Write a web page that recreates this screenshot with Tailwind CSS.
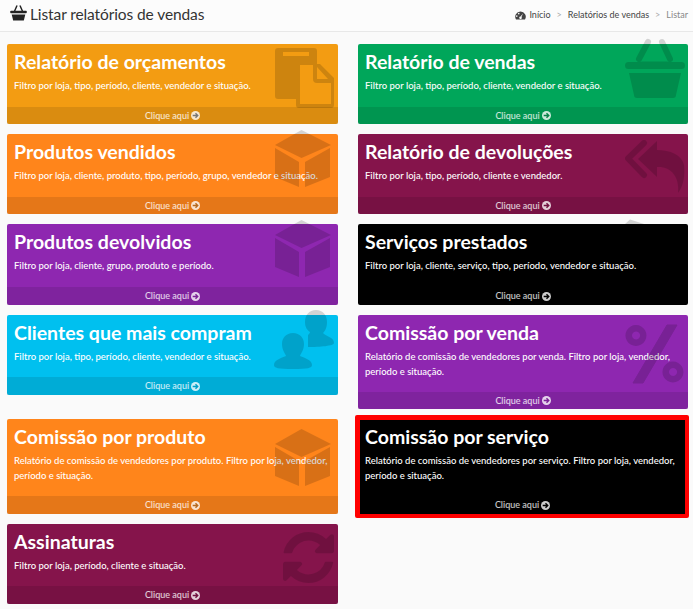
<!DOCTYPE html>
<html lang="en">
<head>
    <meta charset="UTF-8">
    <title>Listar relatórios de vendas</title>
    <script src="https://cdn.jsdelivr.net/npm/@tailwindcss/browser@4"></script>
</head>
<body class="bg-[#fafafa] font-['Lato',sans-serif] overflow-hidden">
    <!-- header -->
    <header class="h-[32px] bg-[#fcfcfc] border-b border-[#e8e8e8] flex items-center justify-between pl-[10px] pr-[5px]">
        <h1 class="flex items-center text-[15.5px] tracking-[-0.1px] text-[#333] leading-[28px] -mt-[3px]">
            <svg class="w-[17px] h-[17px] mr-[3px] -mt-[3px]" viewBox="0 0 70 70" fill="#222">
                <g stroke="#222" stroke-width="6" stroke-linecap="round"><path d="M28 8 19 29M42 8l9 21"/></g>
                <rect x="1" y="28" width="68" height="10" rx="3"/>
                <path d="M7 43h56l-6 25H13z"/>
            </svg>
            Listar relatórios de vendas
        </h1>
        <nav class="flex items-center text-[9px] text-[#444] mt-[-1px]">
            <svg class="w-[11px] h-[9px] mr-[3px]" viewBox="0 0 22 18" fill="#444">
                <path fill-rule="evenodd" d="M11 1a10.500 10.500 0 0 1 9 16H2A10.500 10.500 0 0 1 11 1ZM5 10a1.500 1.500 0 1 0 0 .1ZM9 5a1.500 1.500 0 1 0 0 .1ZM16 5l-5 6a2.500 2.500 0 1 0 2 1Z"/>
            </svg>
            <span>Início</span>
            <span class="mx-[6px] text-[#aaa]">&gt;</span>
            <span>Relatórios de vendas</span>
            <span class="mx-[6px] text-[#aaa]">&gt;</span>
            <span class="text-[#888]">Listar</span>
        </nav>
    </header>

    <main class="grid grid-cols-[331px_330px] gap-x-5 items-start pl-[7px] pt-[12px]">
        <!-- Relatório de orçamentos -->
        <a class="relative block mb-[10px] rounded-[2px] bg-[#f39c12] text-white">
            <div class="h-[63px] pt-[6px] px-[7px]">
                <h3 class="text-[19.5px] font-bold leading-[24px] mb-[4px]">Relatório de orçamentos</h3>
                <p class="text-[9.5px] font-medium leading-[15px]">Filtro por loja, tipo, período, cliente, vendedor e situação.</p>
            </div>
            <div class="h-[17px] bg-black/10 flex items-center justify-center text-[9px] font-medium text-white/80">Clique aqui
                <svg class="w-[9px] h-[9px] ml-[2px]" viewBox="0 0 16 16"><circle cx="8" cy="8" r="8" fill="#fff" fill-opacity=".8"/><path d="M3 8h8M8 4l4 4-4 4" stroke="#777" stroke-width="2.500" fill="none"/></svg>
            </div>
            <svg class="absolute left-[263px] top-[-4px] w-[70px] h-[70px] opacity-15" viewBox="0 0 70 70">
                <path fill-rule="evenodd" d="M8 8H44a3 3 0 0 1 3 3V24H50L64 38V65a3 3 0 0 1-3 3H29a3 3 0 0 1-3-3V59H8a3 3 0 0 1-3-3V11a3 3 0 0 1 3-3ZM13 12V16H39V12ZM30 25V64H61V43H47a4 4 0 0 1-4-4V25ZM47 27V39H58Z"/>
            </svg>
        </a>
        <!-- Relatório de vendas -->
        <a class="relative block mb-[10px] rounded-[2px] bg-[#00a65a] text-white">
            <div class="h-[63px] pt-[6px] px-[7px]">
                <h3 class="text-[19.5px] font-bold leading-[24px] mb-[4px]">Relatório de vendas</h3>
                <p class="text-[9.5px] font-medium leading-[15px]">Filtro por loja, tipo, período, cliente, vendedor e situação.</p>
            </div>
            <div class="h-[17px] bg-black/10 flex items-center justify-center text-[9px] font-medium text-white/80">Clique aqui
                <svg class="w-[9px] h-[9px] ml-[2px]" viewBox="0 0 16 16"><circle cx="8" cy="8" r="8" fill="#fff" fill-opacity=".8"/><path d="M3 8h8M8 4l4 4-4 4" stroke="#0a8048" stroke-width="2.500" fill="none"/></svg>
            </div>
            <svg class="absolute left-[262px] top-[-14px] w-[70px] h-[70px] opacity-15" viewBox="0 0 70 70">
                <path d="M28 12 19 29M42 12l8 17" stroke="#000" stroke-width="6" stroke-linecap="round"/>
                <path d="M8 32H19L22 31.500H47L50 32H61.500a3.500 3.500 0 0 1 0 7H8.500a3.500 3.500 0 0 1 0-7Z"/>
                <path d="M9 43H61L56 65a3 3 0 0 1-3 3H17a3 3 0 0 1-3-3Z"/>
            </svg>
        </a>
        <!-- Produtos vendidos -->
        <a class="relative block mb-[10px] rounded-[2px] bg-[#ff851b] text-white">
            <div class="h-[63px] pt-[6px] px-[7px]">
                <h3 class="text-[19.5px] font-bold leading-[24px] mb-[4px]">Produtos vendidos</h3>
                <p class="text-[9.5px] font-medium leading-[15px] whitespace-nowrap">Filtro por loja, cliente, produto, tipo, período, grupo, vendedor e situação.</p>
            </div>
            <div class="h-[17px] bg-black/10 flex items-center justify-center text-[9px] font-medium text-white/80">Clique aqui
                <svg class="w-[9px] h-[9px] ml-[2px]" viewBox="0 0 16 16"><circle cx="8" cy="8" r="8" fill="#fff" fill-opacity=".8"/><path d="M3 8h8M8 4l4 4-4 4" stroke="#b66a20" stroke-width="2.500" fill="none"/></svg>
            </div>
            <svg class="absolute left-[263px] top-[-8px] w-[70px] h-[70px] opacity-15" viewBox="0 0 70 70">
                <path d="M31.500 4 61 19 31.500 32 5 19ZM5 22 29 36V61L5 51ZM35 36 60 22V51L35 61Z"/>
            </svg>
        </a>
        <!-- Relatório de devoluções -->
        <a class="relative block mb-[10px] rounded-[2px] bg-[#85144b] text-white">
            <div class="h-[63px] pt-[6px] px-[7px]">
                <h3 class="text-[19.5px] font-bold leading-[24px] mb-[4px]">Relatório de devoluções</h3>
                <p class="text-[9.5px] font-medium leading-[15px]">Filtro por loja, tipo, período, cliente e vendedor.</p>
            </div>
            <div class="h-[17px] bg-black/10 flex items-center justify-center text-[9px] font-medium text-white/80">Clique aqui
                <svg class="w-[9px] h-[9px] ml-[2px]" viewBox="0 0 16 16"><circle cx="8" cy="8" r="8" fill="#fff" fill-opacity=".8"/><path d="M3 8h8M8 4l4 4-4 4" stroke="#701040" stroke-width="2.500" fill="none"/></svg>
            </div>
            <svg class="absolute left-[262px] top-[-104px] w-[70px] h-[170px] opacity-15" viewBox="0 0 70 170">
                <path d="M24 113 8 128.500 24 145" stroke="#000" stroke-width="6" stroke-linecap="round" stroke-linejoin="round" fill="none"/>
                <path d="M37 111 18 129 37 147V137C50 136 60 146 58 163 64 155 65 145 64 135 62 125 50 120 37 120Z"/>
            </svg>
        </a>
        <!-- Produtos devolvidos -->
        <a class="relative block mb-[10px] rounded-[2px] bg-[#8e27b0] text-white">
            <div class="h-[63px] pt-[6px] px-[7px]">
                <h3 class="text-[19.5px] font-bold leading-[24px] mb-[4px]">Produtos devolvidos</h3>
                <p class="text-[9.5px] font-medium leading-[15px]">Filtro por loja, cliente, grupo, produto e período.</p>
            </div>
            <div class="h-[18px] bg-black/10 flex items-center justify-center text-[9px] font-medium text-white/80">Clique aqui
                <svg class="w-[9px] h-[9px] ml-[2px]" viewBox="0 0 16 16"><circle cx="8" cy="8" r="8" fill="#fff" fill-opacity=".8"/><path d="M3 8h8M8 4l4 4-4 4" stroke="#7a2296" stroke-width="2.500" fill="none"/></svg>
            </div>
            <svg class="absolute left-[263px] top-[-8px] w-[70px] h-[70px] opacity-15" viewBox="0 0 70 70">
                <path d="M31.500 4 61 19 31.500 32 5 19ZM5 22 29 36V61L5 51ZM35 36 60 22V51L35 61Z"/>
            </svg>
        </a>
        <!-- Serviços prestados -->
        <a class="relative block mb-[10px] rounded-[2px] bg-black text-white">
            <div class="h-[63px] pt-[6px] px-[7px]">
                <h3 class="text-[19.5px] font-bold leading-[24px] mb-[4px]">Serviços prestados</h3>
                <p class="text-[9.5px] font-medium leading-[15px]">Filtro por loja, cliente, serviço, tipo, período, vendedor e situação.</p>
            </div>
            <div class="h-[18px] flex items-center justify-center text-[9px] font-medium text-white/80">Clique aqui
                <svg class="w-[9px] h-[9px] ml-[2px]" viewBox="0 0 16 16"><circle cx="8" cy="8" r="8" fill="#fff" fill-opacity=".8"/><path d="M3 8h8M8 4l4 4-4 4" stroke="#000" stroke-width="2.500" fill="none"/></svg>
            </div>
            <svg class="absolute left-[265px] top-[-5px] w-[24px] h-[5px] opacity-15" viewBox="0 0 24 5">
                <path d="M2 5 7 0.500 21 5Z"/>
            </svg>
        </a>
        <!-- Clientes que mais compram -->
        <a class="relative block mb-[10px] rounded-[2px] bg-[#00c0ef] text-white">
            <div class="h-[62px] pt-[6px] px-[7px]">
                <h3 class="text-[19.5px] font-bold leading-[24px] mb-[4px]">Clientes que mais compram</h3>
                <p class="text-[9.5px] font-medium leading-[15px]">Filtro por loja, tipo, período, cliente, vendedor e situação.</p>
            </div>
            <div class="h-[18px] bg-black/10 flex items-center justify-center text-[9px] font-medium text-white/80">Clique aqui
                <svg class="w-[9px] h-[9px] ml-[2px]" viewBox="0 0 16 16"><circle cx="8" cy="8" r="8" fill="#fff" fill-opacity=".8"/><path d="M3 8h8M8 4l4 4-4 4" stroke="#00a0c8" stroke-width="2.500" fill="none"/></svg>
            </div>
            <svg class="absolute left-[263px] top-[-10px] w-[70px] h-[70px] opacity-15" viewBox="0 0 70 70">
                <path d="M23 28C30 28 34 33 34 39 34 45 31 48 30 51 35 53 42 55 42 60 42 63 38 64 23 64 8 64 4 63 4 60 4 55 11 53 16 51 15 48 12 45 12 39 12 33 16 28 23 28Z"/>
                <path d="M46 5C53 5 57 10 57 17 57 23 55 26 53 28 55 31 64 32 64 38 64 41 50 42 38 42V30C39 29 40 28 40 27 37 25 35 22 35 17 35 10 39 5 46 5Z"/>
            </svg>
        </a>
        <!-- Comissão por venda -->
        <a class="relative block mb-[10px] rounded-[2px] bg-[#8e27b0] text-white">
            <div class="h-[77px] pt-[6px] px-[7px]">
                <h3 class="text-[19.5px] font-bold leading-[24px] mb-[4px]">Comissão por venda</h3>
                <p class="text-[9.5px] font-medium leading-[15px]">Relatório de comissão de vendedores por venda. Filtro por loja, vendedor, período e situação.</p>
            </div>
            <div class="h-[17px] bg-black/10 flex items-center justify-center text-[9px] font-medium text-white/80">Clique aqui
                <svg class="w-[9px] h-[9px] ml-[2px]" viewBox="0 0 16 16"><circle cx="8" cy="8" r="8" fill="#fff" fill-opacity=".8"/><path d="M3 8h8M8 4l4 4-4 4" stroke="#7a2296" stroke-width="2.500" fill="none"/></svg>
            </div>
            <svg class="absolute left-[262px] top-[-100px] w-[70px] h-[170px] opacity-15" viewBox="0 0 70 170">
                <path fill-rule="evenodd" d="M16 110a10.500 10.500 0 1 1-.1 0ZM16 116.500a4 4 0 1 0 .1 0ZM53 146.500a10.500 10.500 0 1 1-.1 0ZM53 153a4 4 0 1 0 .1 0Z"/>
                <path d="M47 110H57L23 168H13Z" stroke="#000" stroke-width="1" stroke-linejoin="round"/>
            </svg>
        </a>
        <!-- Comissão por produto -->
        <a class="relative block mb-[10px] rounded-[2px] bg-[#ff851b] text-white">
            <div class="h-[77px] pt-[6px] px-[7px]">
                <h3 class="text-[19.5px] font-bold leading-[24px] mb-[4px]">Comissão por produto</h3>
                <p class="text-[9.5px] font-medium leading-[15px]">Relatório de comissão de vendedores por produto. Filtro por loja, vendedor, período e situação.</p>
            </div>
            <div class="h-[18px] bg-black/10 flex items-center justify-center text-[9px] font-medium text-white/80">Clique aqui
                <svg class="w-[9px] h-[9px] ml-[2px]" viewBox="0 0 16 16"><circle cx="8" cy="8" r="8" fill="#fff" fill-opacity=".8"/><path d="M3 8h8M8 4l4 4-4 4" stroke="#b66a20" stroke-width="2.500" fill="none"/></svg>
            </div>
            <svg class="absolute left-[263px] top-[6px] w-[70px] h-[70px] opacity-15" viewBox="0 0 70 70">
                <path d="M31.500 4 61 19 31.500 32 5 19ZM5 22 29 36V61L5 51ZM35 36 60 22V51L35 61Z"/>
            </svg>
        </a>
        <!-- Comissão por serviço, highlighted -->
        <a class="relative block -mt-[4px] -ml-[3px] mr-[-1px] mb-[6px] rounded-[2px] border-[5px] border-[#ff0000] border-r-4 border-b-4 bg-black text-white">
            <div class="h-[76px] pt-[5px] pl-[5px] pr-[3px]">
                <h3 class="text-[19.5px] font-bold leading-[24px] mb-[4px]">Comissão por serviço</h3>
                <p class="text-[9.5px] font-medium leading-[15px]">Relatório de comissão de vendedores por serviço. Filtro por loja, vendedor, período e situação.</p>
            </div>
            <div class="h-[18px] flex items-center justify-center text-[9px] font-medium text-white/80">Clique aqui
                <svg class="w-[9px] h-[9px] ml-[2px]" viewBox="0 0 16 16"><circle cx="8" cy="8" r="8" fill="#fff" fill-opacity=".8"/><path d="M3 8h8M8 4l4 4-4 4" stroke="#000" stroke-width="2.500" fill="none"/></svg>
            </div>
        </a>
        <!-- Assinaturas -->
        <a class="relative block mb-[10px] rounded-[2px] bg-[#85144b] text-white">
            <div class="h-[62px] pt-[6px] px-[7px]">
                <h3 class="text-[19.5px] font-bold leading-[24px] mb-[4px]">Assinaturas</h3>
                <p class="text-[9.5px] font-medium leading-[15px]">Filtro por loja, período, cliente e situação.</p>
            </div>
            <div class="h-[18px] bg-black/10 flex items-center justify-center text-[9px] font-medium text-white/80">Clique aqui
                <svg class="w-[9px] h-[9px] ml-[2px]" viewBox="0 0 16 16"><circle cx="8" cy="8" r="8" fill="#fff" fill-opacity=".8"/><path d="M3 8h8M8 4l4 4-4 4" stroke="#701040" stroke-width="2.500" fill="none"/></svg>
            </div>
            <svg class="absolute left-[276px] top-[8px] w-[51px] h-[51px] opacity-15" viewBox="128 128 1536 1536">
                <path d="M1639 1056q0 5-1 7-64 268-268 434.500t-478 166.500q-146 0-282.500-55t-243.500-157l-129 129q-19 19-45 19t-45-19-19-45v-448q0-26 19-45t45-19h448q26 0 45 19t19 45-19 45l-137 137q71 66 161 102t187 36q134 0 250-65t186-179q11-17 53-117 8-23 30-23h192q13 0 22.500 9.500t9.500 22.500zm25-800v448q0 26-19 45t-45 19h-448q-26 0-45-19t-19-45 19-45l138-138q-148-137-349-137-134 0-250 65t-186 179q-11 17-53 117-8 23-30 23h-199q-13 0-22.500-9.500t-9.500-22.500v-7q65-268 270-434.500t480-166.500q146 0 284 55.500t245 156.500l130-129q19-19 45-19t45 19 19 45z"/>
            </svg>
        </a>
    </main>
</body>
</html>
